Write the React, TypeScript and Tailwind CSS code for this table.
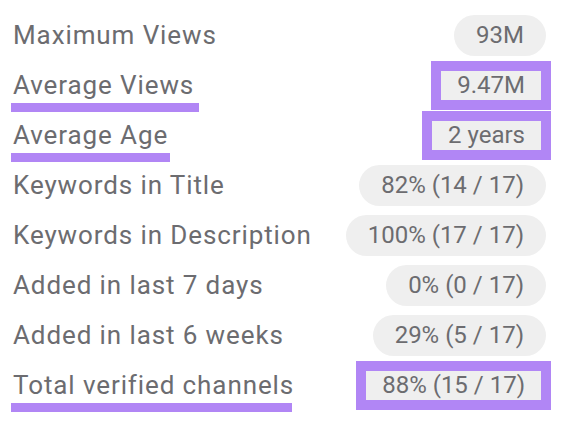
type Row = {
  label: string
  value: string
  mark?: boolean
  bar?: number
}

const rows: Row[] = [
  { label: 'Maximum Views', value: '93M' },
  { label: 'Average Views', value: '9.47M', mark: true, bar: 188 },
  { label: 'Average Age', value: '2 years', mark: true, bar: 159 },
  { label: 'Keywords in Title', value: '82% (14 / 17)' },
  { label: 'Keywords in Description', value: '100% (17 / 17)' },
  { label: 'Added in last 7 days', value: '0% (0 / 17)' },
  { label: 'Added in last 6 weeks', value: '29% (5 / 17)' },
  { label: 'Total verified channels', value: '88% (15 / 17)', mark: true, bar: 281 },
]

function Value({ row }: { row: Row }) {
  if (row.mark) {
    return (
      <div className="-mr-[5px] border-[10px] border-[#b186f5] bg-[#efefef] h-[49px] px-[16px] flex items-center text-[24px] leading-none">
        {row.value}
      </div>
    )
  }
  return (
    <div className="bg-[#efefef] rounded-full h-[41px] px-[22px] flex items-center text-[24px] leading-none">
      {row.value}
    </div>
  )
}

export default function App() {
  return (
    <div className="w-[566px] h-[433px] bg-white pt-[10px] pl-[13px] pr-[20px] text-[#6c6c70]" style={{ fontFamily: 'Roboto, "Liberation Sans", sans-serif' }}>
      {rows.map((row) => (
        <div key={row.label} className="flex items-center justify-between h-[50px]">
          <div className="relative text-[26px] leading-none tracking-[0.9px]">
            {row.label}
            {row.bar && (
              <div className="absolute -left-[2px] top-[31px] h-[9px] bg-[#b186f5]" style={{ width: row.bar }} />
            )}
          </div>
          <Value row={row} />
        </div>
      ))}
    </div>
  )
}
